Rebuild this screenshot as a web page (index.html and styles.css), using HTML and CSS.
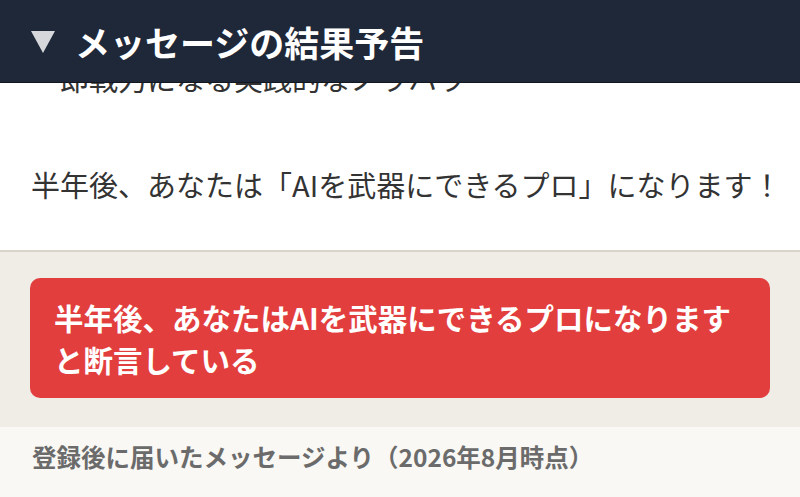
FILE: index.html
```html
<!DOCTYPE html>
<html lang="ja">
<head>
<meta charset="utf-8">
<title>メッセージの結果予告</title>
<link rel="stylesheet" href="styles.css">
</head>
<body>
<div class="page">
  <header class="head">
    <svg class="tri" width="24" height="22" viewBox="0 0 24 22"><polygon points="0,0 24,0 12,22" fill="#d5d7db"/></svg>
    <h1 class="title">メッセージの結果予告</h1>
  </header>
  <section class="msg">
    <p class="line clipped">・即戦力になる実践的なノウハウ</p>
    <p class="line main">半年後、あなたは「AIを武器にできるプロ」になります！</p>
  </section>
  <section class="verdict">
    <div class="redbox">半年後、あなたはAIを武器にできるプロになります<br>と断言している</div>
  </section>
  <footer class="note">登録後に届いたメッセージより（2026年8月時点）</footer>
</div>
</body>
</html>
```

FILE: styles.css
```css
* { box-sizing: border-box; }
html, body { margin: 0; padding: 0; }
body {
  width: 800px;
  height: 497px;
  overflow: hidden;
  font-family: "Noto Sans CJK JP", "Noto Sans", sans-serif;
  background: #f9f8f4;
}
.page { display: flex; flex-direction: column; }
.head {
  height: 83px;
  background: #1f2838;
  border-bottom: 1px solid #12161f;
  display: flex;
  align-items: center;
  padding-left: 31px;
  gap: 20px;
}
.tri { display: block; margin-top: 1px; }
.title {
  margin: 0;
  color: #ffffff;
  font-size: 35px;
  font-weight: 700;
  line-height: 83px;
  letter-spacing: 0;
}
.msg {
  background: #ffffff;
  height: 169px;
  overflow: hidden;
  padding: 0 0 0 31px;
  border-bottom: 2px solid #d9d4c9;
}
.line {
  margin: 0;
  font-size: 29px;
  line-height: 46px;
  color: #333333;
  white-space: nowrap;
}
.clipped { margin-top: -28px; }
.main { margin-top: 60px; }
.verdict {
  background: #efede6;
  padding: 26px 30px 29px;
}
.redbox {
  background: #e23e3e;
  border-radius: 10px;
  color: #ffffff;
  font-size: 29.5px;
  font-weight: 700;
  line-height: 42px;
  padding: 18px 24px;
  height: 120px;
}
.note {
  background: #f9f8f4;
  padding: 12px 0 0 32px;
  font-size: 24.5px;
  line-height: 36px;
  font-weight: 700;
  color: #6b6b6b;
}
```
